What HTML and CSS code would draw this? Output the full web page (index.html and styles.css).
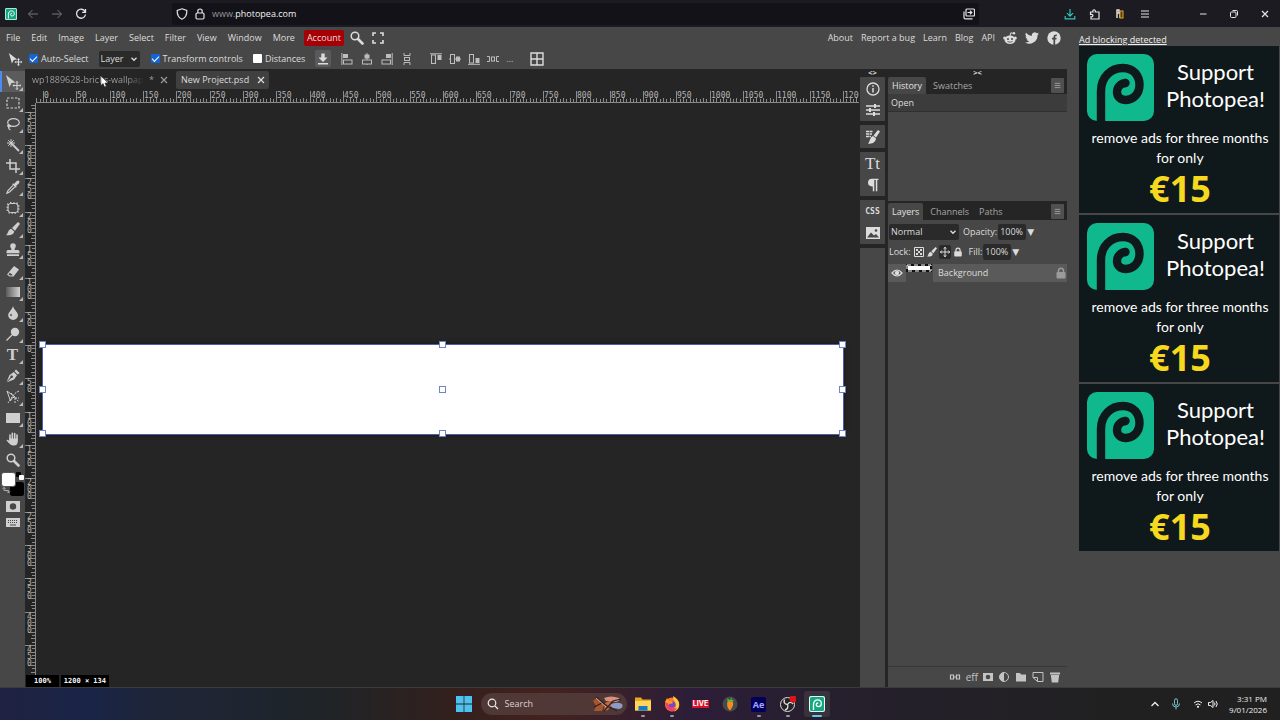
FILE: index.html
```html
<!DOCTYPE html>
<html lang="en">
<head>
<meta charset="utf-8">
<title>Photopea</title>
<link rel="stylesheet" href="styles.css">
</head>
<body>
<svg class="sprite" aria-hidden="true">
  <symbol id="pea" viewBox="0 0 67 67"><rect width="67" height="67" rx="10" fill="#10b88d"/><path d="M14 67V37C14 23 24 14 36 14C47 14 52.500 22 52.500 31C52.500 40 46 46 39 46C33 46 30 42 30 38C30 33 34 29 39 29" fill="none" stroke="#0f181a" stroke-width="8.400"/><circle cx="38.500" cy="29" r="4.200" fill="#0f181a"/></symbol>
  <symbol id="pea-app" viewBox="0 0 16 16"><rect width="16" height="16" rx="2" fill="#e8f7f2"/><rect x="1" y="1" width="14" height="14" rx="1.500" fill="#12a982"/><path d="M4.500 14V8.500C4.500 5.500 6.500 3.800 8.600 3.800C11 3.800 12.300 5.500 12.300 7.400C12.300 9.400 11 10.600 9.300 10.600C8 10.600 7.300 9.700 7.300 8.800C7.300 7.700 8 7 9.200 7" fill="none" stroke="#fff" stroke-width="1.300"/></symbol>
  <symbol id="move" viewBox="0 0 16 16"><path d="M1 1L10.500 8.500L6.500 9L4.500 13Z" fill="currentColor"/><path d="M12 7.500V15.500M8 11.500H16" stroke="currentColor" stroke-width="1.200"/><path d="M10.700 9L12 7.200L13.300 9M10.700 14L12 15.800L13.300 14M9.500 10.200L7.700 11.500L9.500 12.800M14.500 10.200L16.200 11.500L14.500 12.800" fill="none" stroke="currentColor" stroke-width=".7"/></symbol>
  <symbol id="close" viewBox="0 0 10 10"><path d="M2 2L8 8M8 2L2 8" stroke="currentColor" stroke-width="1.200"/></symbol>
  <symbol id="menu" viewBox="0 0 10 10"><path d="M1 2H9M1 5H9M1 8H9" stroke="currentColor" stroke-width="1.200"/></symbol>
  <symbol id="chevron" viewBox="0 0 8 8"><path d="M1.500 2.800L4 5.300L6.500 2.800" fill="none" stroke="currentColor" stroke-width="1.300"/></symbol>
  <symbol id="lock" viewBox="0 0 12 12"><rect x="1.500" y="5" width="9" height="6.500" rx="1" fill="currentColor"/><path d="M3.500 5.500V4A2.500 2.800 0 0 1 8.500 4V5.500" fill="none" stroke="currentColor" stroke-width="1.500"/></symbol>
  <symbol id="magnifier" viewBox="0 0 14 14"><circle cx="5" cy="5" r="3.800" fill="none" stroke="currentColor" stroke-width="1.500"/><path d="M8 8L12.500 12.500" stroke="currentColor" stroke-width="2.600" stroke-linecap="round"/></symbol>
  <symbol id="brush" viewBox="0 0 14 14"><path d="M12 0L14 1.800L9 8.800L6 6Z" fill="currentColor"/><path d="M5.200 6.800L8.200 9.600C7.800 12.800 4.500 13.800 0 13.200C2.300 12 1.800 7.600 5.200 6.800Z" fill="currentColor"/></symbol>
  <symbol id="mask" viewBox="0 0 14 11"><path fill-rule="evenodd" d="M0 0H14V11H0ZM7 2.300A3.200 3.200 0 1 0 7 8.700A3.200 3.200 0 1 0 7 2.300Z" fill="currentColor"/></symbol>
</svg>

<header class="browser">
  <nav class="browser-nav" aria-label="Browser">
    <svg class="i12"><use href="#pea-app"/></svg>
    <button class="ghost dim" aria-label="Back"><svg class="i12" viewBox="0 0 12 12"><path d="M11 6H1.500M5.500 2L1.500 6L5.500 10" fill="none" stroke="currentColor"/></svg></button>
    <button class="ghost dim" aria-label="Forward"><svg class="i12" viewBox="0 0 12 12"><path d="M1 6H10.500M6.500 2L10.500 6L6.500 10" fill="none" stroke="currentColor"/></svg></button>
    <button class="ghost" aria-label="Reload"><svg class="i12" viewBox="0 0 12 12"><path d="M10 3.500A4.500 4.500 0 1 0 10.500 6.500M10.500 1V4.300H7.200" fill="none" stroke="currentColor" stroke-width="1.300"/></svg></button>
  </nav>
  <div class="address">
    <svg class="i12" viewBox="0 0 12 12"><path d="M6 .8L10.800 2.500C11 7 9 10 6 11.300C3 10 1 7 1.200 2.500Z" fill="none" stroke="currentColor" stroke-width="1.200"/></svg>
    <svg class="i12" viewBox="0 0 12 12"><rect x="2" y="5" width="8" height="6" rx="1.200" fill="none" stroke="currentColor" stroke-width="1.200"/><path d="M3.800 5V3.200A2.200 2.200 0 0 1 8.200 3.200V5" fill="none" stroke="currentColor" stroke-width="1.200"/></svg>
    <p class="url"><span>www.</span>photopea.com</p>
    <button class="ghost" aria-label="Switch to tab"><svg class="i12" viewBox="0 0 12 12"><rect x="3" y="1" width="8.500" height="7" rx="1" fill="none" stroke="currentColor" stroke-width="1.200"/><path d="M1 3.500V9.500Q1 10.800 2.300 10.800H9.500M4.500 4.500H8.500M7 2.800L8.800 4.500L7 6.200" fill="none" stroke="currentColor" stroke-width="1.200"/></svg></button>
  </div>
  <div class="browser-tools">
    <button class="ghost teal" aria-label="Downloads"><svg class="i12" viewBox="0 0 12 12"><path d="M6 1V8M3 5.200L6 8.200L9 5.200M1.200 8V10.800H10.800V8" fill="none" stroke="currentColor" stroke-width="1.200"/></svg></button>
    <button class="ghost" aria-label="Extensions"><svg class="i12" viewBox="0 0 12 12"><path d="M1.500 4H4C3 1 7 1 6.300 4H10V11H2V8.800C4.700 9.300 4.700 5.800 1.500 6.500Z" fill="none" stroke="currentColor" stroke-width="1.200"/></svg></button>
    <button class="ghost" aria-label="Extension"><svg class="i12" viewBox="0 0 12 12"><path d="M3 10V2H5V5H3M6 4V10" fill="none" stroke="#ddd" stroke-width="1.500"/><rect x="6" y="3" width="3" height="7" fill="#5a3a10" stroke="#e6a82a"/></svg></button>
    <button class="ghost" aria-label="Application menu"><svg class="i10"><use href="#menu"/></svg></button>
  </div>
  <div class="window-controls">
    <button class="ghost" aria-label="Minimise"><svg class="i10" viewBox="0 0 10 10"><path d="M2 5H8.500" stroke="currentColor"/></svg></button>
    <button class="ghost" aria-label="Restore"><svg class="i10" viewBox="0 0 10 10"><rect x="1.500" y="3" width="5.500" height="5.500" rx="1" fill="none" stroke="currentColor"/><path d="M3.500 1.500H7.500Q8.500 1.500 8.500 2.500V6.500" fill="none" stroke="currentColor"/></svg></button>
    <button class="ghost" aria-label="Close"><svg class="i10"><use href="#close"/></svg></button>
  </div>
</header>

<div class="app">
  <main class="editor">
    <div class="menubar">
      <nav class="menus" aria-label="Menu">
        <button>File</button><button>Edit</button><button>Image</button><button>Layer</button><button>Select</button><button>Filter</button><button>View</button><button>Window</button><button>More</button>
      </nav>
      <button class="account">Account</button>
      <button class="search-tool" aria-label="Search"><svg class="i14"><use href="#magnifier"/></svg></button>
      <button aria-label="Full screen"><svg class="i12" viewBox="0 0 12 12"><path d="M1 4V1H4M8 1H11V4M11 8V11H8M4 11H1V8" fill="none" stroke="currentColor" stroke-width="1.600"/></svg></button>
      <nav class="links" aria-label="Site">
        <a href="#">About</a><a href="#">Report a bug</a><a href="#">Learn</a><a href="#">Blog</a><a href="#">API</a>
        <a href="#" aria-label="Reddit"><svg class="i14" viewBox="0 0 14 14"><ellipse cx="7" cy="8.700" rx="5.500" ry="4.300" fill="currentColor"/><circle cx="1.700" cy="7" r="1.500" fill="currentColor"/><circle cx="12.300" cy="7" r="1.500" fill="currentColor"/><path d="M7 5L7.800 1.800L11 2.500" fill="none" stroke="currentColor"/><circle cx="11" cy="2.300" r="1.200" fill="currentColor"/><circle cx="5" cy="8" r="1" fill="#474747"/><circle cx="9" cy="8" r="1" fill="#474747"/><path d="M4.500 10.500Q7 12 9.500 10.500" fill="none" stroke="#474747" stroke-width=".8"/></svg></a>
        <a href="#" aria-label="Twitter"><svg class="i14" viewBox="0 0 24 24"><path fill="currentColor" d="M24 4.600a10 10 0 0 1-2.800.8 5 5 0 0 0 2.100-2.700 10 10 0 0 1-3.100 1.200 4.900 4.900 0 0 0-8.400 4.500A14 14 0 0 1 1.700 3.100a4.900 4.900 0 0 0 1.500 6.600 5 5 0 0 1-2.200-.6 4.900 4.900 0 0 0 3.900 4.900 5 5 0 0 1-2.200.1 4.900 4.900 0 0 0 4.600 3.400A10 10 0 0 1 0 19.500 14 14 0 0 0 21.500 7.100 10 10 0 0 0 24 4.600Z"/></svg></a>
        <a href="#" aria-label="Facebook"><svg class="i14" viewBox="0 0 14 14"><circle cx="7" cy="7" r="6.700" fill="currentColor"/><path d="M7.300 14V6.500Q7.300 4 9.800 4.300M5 7.700H9.500" fill="none" stroke="#474747" stroke-width="1.700"/></svg></a>
      </nav>
    </div>

    <div class="options">
      <svg class="i14 option-move"><use href="#move"/></svg>
      <label><input type="checkbox" checked>Auto-Select</label>
      <span class="select target"><select aria-label="Select target"><option>Layer</option><option>Group</option></select><svg class="i8"><use href="#chevron"/></svg></span>
      <label><input type="checkbox" checked>Transform controls</label>
      <label><input type="checkbox">Distances</label>
      <button class="export" aria-label="Export"><svg class="i12" viewBox="0 0 12 12"><path d="M4.300 0.500H7.700V4.500H10.500L6 9L1.500 4.500H4.300ZM1 10H11V11.500H1Z" fill="currentColor"/></svg></button>
      <div class="align">
        <button aria-label="Align left"><svg class="i12" viewBox="0 0 12 12"><path d="M.9 0V12" stroke="currentColor"/><rect x="2" y="1" width="5" height="4" fill="currentColor"/><rect x="2.500" y="7" width="8.500" height="4" fill="none" stroke="currentColor"/></svg></button>
        <button aria-label="Align centre"><svg class="i12" viewBox="0 0 12 12"><path d="M6 0V12" stroke="currentColor"/><rect x="3.500" y="1.500" width="5" height="4" fill="currentColor"/><rect x="1.500" y="7" width="9" height="4" fill="#474747" stroke="currentColor"/></svg></button>
        <button aria-label="Align right"><svg class="i12" viewBox="0 0 12 12"><path d="M11.200 0V12" stroke="currentColor"/><rect x="5" y="1" width="5" height="4" fill="currentColor"/><rect x="1" y="7" width="8.500" height="4" fill="none" stroke="currentColor"/></svg></button>
        <button aria-label="Distribute vertically"><svg class="i12" viewBox="0 0 12 12"><path d="M3 0V2.500H9V0M3 12V9.500H9V12" fill="none" stroke="currentColor"/><rect x="3.500" y="4.500" width="5" height="3" fill="none" stroke="currentColor"/></svg></button>
      </div>
      <div class="align second">
        <button aria-label="Align top"><svg class="i12" viewBox="0 0 12 12"><path d="M0 .8H12" stroke="currentColor"/><rect x="1.500" y="2" width="4" height="8.500" fill="none" stroke="currentColor"/><rect x="7.500" y="2" width="4" height="5" fill="currentColor"/></svg></button>
        <button aria-label="Align middle"><svg class="i12" viewBox="0 0 12 12"><path d="M0 6H12" stroke="currentColor"/><rect x="1.500" y="1.500" width="4" height="9" fill="#474747" stroke="currentColor"/><rect x="7" y="3.500" width="4" height="5" fill="currentColor"/></svg></button>
        <button aria-label="Align bottom"><svg class="i12" viewBox="0 0 12 12"><path d="M0 11.300H12" stroke="currentColor"/><rect x="1.500" y="1.500" width="4" height="8.500" fill="none" stroke="currentColor"/><rect x="7.500" y="5" width="4" height="5" fill="currentColor"/></svg></button>
        <button aria-label="Distribute horizontally"><svg class="i12" viewBox="0 0 12 12"><path d="M0 3.500H2.500V8.500H0M12 3.500H9.500V8.500H12" fill="none" stroke="currentColor"/><rect x="4.500" y="4" width="3" height="4" fill="none" stroke="currentColor"/></svg></button>
        <button aria-label="More options">...</button>
      </div>
      <button aria-label="Grid"><svg class="i14" viewBox="0 0 14 14"><path d="M1 1H13V13H1ZM7 1V13M1 7H13" fill="none" stroke="currentColor" stroke-width="1.400"/></svg></button>
    </div>

    <div class="workspace">
      <aside class="tools" aria-label="Tools">
        <button class="tool active" aria-label="Move"><svg class="i16"><use href="#move"/></svg></button>
        <button class="tool" aria-label="Marquee"><svg class="i14" viewBox="0 0 14 14"><rect x="1" y="2" width="12" height="10" fill="none" stroke="currentColor" stroke-width="1.200" stroke-dasharray="2.500 1.500"/></svg></button>
        <button class="tool" aria-label="Lasso"><svg class="i14" viewBox="0 0 14 14"><ellipse cx="7.500" cy="5.500" rx="5.800" ry="3.900" fill="none" stroke="currentColor" stroke-width="1.200"/><path d="M4 8.500C1 7 1 10 3.500 10C6 9 3 7 2.500 10C2.300 12 3.300 12.500 4.500 13" fill="none" stroke="currentColor" stroke-width="1.200"/></svg></button>
        <button class="tool" aria-label="Magic wand"><svg class="i14" viewBox="0 0 14 14"><path d="M5 5L13 13" stroke="currentColor" stroke-width="1.800"/><path d="M5 1V9M1 5H9M2.200 2.200L7.800 7.800M7.800 2.200L2.200 7.800" stroke="currentColor"/></svg></button>
        <button class="tool" aria-label="Crop"><svg class="i14" viewBox="0 0 14 14"><path d="M4 0V10H14M0 4H10V14" fill="none" stroke="currentColor" stroke-width="1.500"/></svg></button>
        <button class="tool" aria-label="Eyedropper"><svg class="i14" viewBox="0 0 14 14"><path d="M8 4L10.500 1.200Q12 0 13.200 1Q14 2.200 12.800 3.500L10 6L10.800 6.800L9.800 7.800L6.200 4.200L7.200 3.200Z" fill="currentColor"/><path d="M7 5.300L2 10.500L.8 13.300L3.500 12L8.800 7" fill="none" stroke="currentColor" stroke-width="1.200"/></svg></button>
        <button class="tool" aria-label="Healing"><svg class="i14" viewBox="0 0 14 14"><rect x="2" y="2.500" width="10" height="9" rx="2.500" fill="none" stroke="currentColor"/><rect x="1.500" y="2" width="11" height="10" rx="3" fill="none" stroke="currentColor" stroke-width="2" stroke-dasharray="1 2"/></svg></button>
        <button class="tool" aria-label="Brush"><svg class="i14"><use href="#brush"/></svg></button>
        <button class="tool" aria-label="Clone stamp"><svg class="i14" viewBox="0 0 14 14"><path d="M5.500 7C5.500 5 4.200 4.800 4.200 3A2.800 2.800 0 0 1 9.800 3C9.800 4.800 8.500 5 8.500 7H12Q13.500 7 13.500 8.500V10.200H.5V8.500Q.5 7 2 7ZM1 11.200H13V13H1Z" fill="currentColor"/></svg></button>
        <button class="tool" aria-label="Eraser"><svg class="i14" viewBox="0 0 14 14"><path d="M8 2L13 5.500L7.500 12.500H3.500L1 10.500Z" fill="currentColor"/><path d="M3.800 8.800L6.800 11L5.900 11.600H4L2.500 10.400Z" fill="#474747"/></svg></button>
        <button class="tool" aria-label="Gradient"><span class="gradient-icon"></span></button>
        <button class="tool" aria-label="Blur"><svg class="i14" viewBox="0 0 14 14"><path d="M7 0C8 4 12 6 12 9.200A4.700 4.500 0 0 1 2.200 9.200C2.200 6 6 4 7 0Z" fill="currentColor"/><circle cx="5" cy="9" r="1.200" fill="#777"/></svg></button>
        <button class="tool" aria-label="Dodge"><svg class="i14" viewBox="0 0 14 14"><circle cx="9" cy="5" r="4.200" fill="currentColor"/><path d="M6 8L.5 13.500" stroke="currentColor" stroke-width="1.300"/></svg></button>
        <button class="tool glyph" aria-label="Type">T</button>
        <button class="tool" aria-label="Pen"><svg class="i14" viewBox="0 0 14 14"><path d="M10 .5L13.500 4L11.800 5.500L8.500 2.200ZM7.800 3L11 6.200L8 10.500L1 13.300L5.300 9A1.300 1.300 0 1 0 4.500 8.300L.7 12.800L3.500 6Z" fill="currentColor"/></svg></button>
        <button class="tool" aria-label="Path select"><svg class="i14" viewBox="0 0 14 14"><path d="M1 1L9 7L6 8L4.500 11Z" fill="none" stroke="currentColor"/><path d="M13 1C8 3 6 7 2 13M5 3L13 12M9 8H13M9 8V13" fill="none" stroke="currentColor" stroke-dasharray="2 1"/></svg></button>
        <button class="tool" aria-label="Rectangle"><svg class="i14" viewBox="0 0 14 14"><path d="M0 2H14V12H0Z" fill="currentColor"/></svg></button>
        <button class="tool" aria-label="Hand"><svg class="i14" viewBox="0 0 14 14"><path d="M4 8V3M6.300 7V1.300M8.700 7V1.500M11 8V3" stroke="currentColor" stroke-width="1.600" stroke-linecap="round"/><path d="M3.200 6.500H11.800V9C11.800 12 10.500 13.500 8 13.500C5 13.500 4 12.500 .5 8.500C1 7.500 2 7.500 3.200 9Z" fill="currentColor"/></svg></button>
        <button class="tool last" aria-label="Zoom"><svg class="i14"><use href="#magnifier"/></svg></button>
        <div class="colours">
          <svg viewBox="0 0 25 26"><rect x="10" y="11" width="14" height="14" rx="2.500" fill="#000"/><rect x="1.500" y="1.500" width="14" height="14" rx="2.500" fill="#fff" stroke="#555"/><rect x="16" y="1" width="5" height="5" rx="1" fill="#000"/><rect x="19" y="4" width="5" height="5" rx="1" fill="#fff"/><path d="M4 16.500V19.500H8.500V21.500M2.500 18L4 16.300L5.500 18M7 20.500L8.500 22L10 20.500" fill="none" stroke="#aaa"/></svg>
        </div>
        <button class="mode" aria-label="Quick mask"><svg viewBox="0 0 14 11"><use href="#mask"/></svg></button>
        <button class="mode" aria-label="Keyboard"><svg viewBox="0 0 14 11"><path d="M0 1H14V10H0Z" fill="currentColor"/><path d="M2 3.500H12M2 5.500H12" stroke="#474747" stroke-dasharray="1 1"/><path d="M4 8H10" stroke="#474747"/></svg></button>
      </aside>

      <section class="document">
        <div class="tabs">
          <div class="tab muted"><span class="name">wp1889628-bricks-wallpap</span><span>*</span><button aria-label="Close tab"><svg class="i10"><use href="#close"/></svg></button></div>
          <div class="tab current"><span>New Project.psd</span><button aria-label="Close tab"><svg class="i10"><use href="#close"/></svg></button></div>
        </div>
        <div class="ruler-x" id="ruler-x"></div>
        <div class="ruler-y" id="ruler-y"></div>
        <div class="canvas">
          <div class="artboard">
            <i class="handle n w"></i><i class="handle n c"></i><i class="handle n e"></i>
            <i class="handle m w"></i><i class="handle m c"></i><i class="handle m e"></i>
            <i class="handle s w"></i><i class="handle s c"></i><i class="handle s e"></i>
          </div>
        </div>
        <div class="status"><span>100%</span><span>1200 × 134</span></div>
        <svg class="cursor" viewBox="0 0 10 14"><path d="M1 1V11.500L3.500 9.300L5 13L7 12.200L5.500 8.700H9Z" fill="#fff" stroke="#222" stroke-width=".6"/></svg>
      </section>

      <aside class="dock" aria-label="Collapsed panels">
        <button class="collapse" aria-label="Expand">&lt;&gt;</button>
        <div class="dock-group">
          <button aria-label="Info"><svg class="i14" viewBox="0 0 14 14"><circle cx="7" cy="7" r="6" fill="none" stroke="currentColor" stroke-width="1.300"/><path d="M7 6V10.500M7 3.300V4.800" stroke="currentColor" stroke-width="1.500"/></svg></button>
          <button aria-label="Properties"><svg class="i14" viewBox="0 0 14 14"><path d="M0 3H14M0 7H14M0 11H14" stroke="currentColor" stroke-width="1.300"/><path d="M9 1V5M4 5V9M8 9V13" stroke="currentColor" stroke-width="2"/></svg></button>
        </div>
        <div class="dock-group">
          <button aria-label="Brushes"><svg class="i14" viewBox="0 0 14 14"><path d="M0 1.500H7M0 4H6M0 6.500H5" stroke="currentColor" stroke-width="1.300" stroke-dasharray="3 .5"/><path d="M12 0L14 1.500L10 7.500L7.500 5.500ZM7 6L10 8.500C9.500 12.500 6 14.300 2 13.500C4 12 3.500 7.500 7 6Z" fill="currentColor"/></svg></button>
        </div>
        <div class="dock-group">
          <button class="glyph" aria-label="Character">Tt</button>
          <button class="glyph" aria-label="Paragraph"><svg class="i14" viewBox="0 0 14 14"><path d="M12.500 .8H6A4 3.800 0 0 0 6 8.400H6.800V13.300H8.300V2H9.800V13.300H11.300V2H12.500Z" fill="currentColor"/></svg></button>
        </div>
        <div class="dock-group">
          <button class="css" aria-label="CSS">CSS</button>
          <button aria-label="Image"><svg class="i14" viewBox="0 0 14 14"><path d="M0 1H14V13H0Z" fill="currentColor"/><path d="M1 11.500L5 6.500L8 9.500L10 8L13 11.500Z" fill="#474747"/><circle cx="10" cy="4.500" r="1.300" fill="#474747"/></svg></button>
        </div>
        <div class="dock-rest"></div>
      </aside>

      <aside class="panels">
        <button class="collapse" aria-label="Collapse">&gt;&lt;</button>
        <section class="history">
          <div class="panel-tabs"><button class="on">History</button><button>Swatches</button><button class="panel-menu" aria-label="Panel menu"><svg viewBox="0 0 10 10"><use href="#menu"/></svg></button></div>
          <p class="history-item">Open</p>
        </section>
        <section class="layers">
          <div class="panel-tabs"><button class="on">Layers</button><button>Channels</button><button>Paths</button><button class="panel-menu" aria-label="Panel menu"><svg viewBox="0 0 10 10"><use href="#menu"/></svg></button></div>
          <div class="layer-row">
            <span class="select blend"><select aria-label="Blend mode"><option>Normal</option><option>Multiply</option></select><svg class="i8"><use href="#chevron"/></svg></span>
            <label>Opacity: <input type="text" value="100%"></label><button class="drop" aria-label="Opacity slider">▼</button>
          </div>
          <div class="layer-row locks">
            <span>Lock:</span>
            <button aria-label="Lock transparency"><svg class="i10" viewBox="0 0 10 10"><path d="M.5.5H9.500V9.500H.5Z" fill="none" stroke="currentColor"/><path d="M2 2H4V4H2ZM6 2H8V4H6ZM4 4H6V6H4ZM2 6H4V8H2ZM6 6H8V8H6Z" fill="currentColor"/></svg></button>
            <button aria-label="Lock pixels"><svg class="i10"><use href="#brush"/></svg></button>
            <button class="pressed" aria-label="Lock position"><svg class="i10" viewBox="0 0 10 10"><path d="M5 0V10M0 5H10M3.500 1.800L5 .4L6.500 1.800M3.500 8.200L5 9.600L6.500 8.200M1.800 3.500L.4 5L1.800 6.500M8.200 3.500L9.600 5L8.200 6.500" fill="none" stroke="currentColor"/></svg></button>
            <button aria-label="Lock all"><svg class="i10"><use href="#lock"/></svg></button>
            <label>Fill: <input type="text" value="100%"></label><button class="drop" aria-label="Fill slider">▼</button>
          </div>
          <div class="layer">
            <button class="eye" aria-label="Visibility"><svg class="i12" viewBox="0 0 12 12"><path d="M1 6Q6 0 11 6Q6 12 1 6Z" fill="none" stroke="currentColor" stroke-width="1.200"/><circle cx="6" cy="6" r="2.200" fill="currentColor"/></svg></button>
            <span class="thumb"><svg viewBox="0 0 26 8"><path d="M1 1H25V7H1Z" fill="#fff" stroke="#111" stroke-width="2"/><path d="M1 1H25V7H1Z" fill="none" stroke="#fff" stroke-dasharray="4 3"/></svg></span>
            <span class="layer-name">Background</span>
            <svg class="i12 layer-lock"><use href="#lock"/></svg>
          </div>
          <div class="layer-actions">
            <button aria-label="Link"><svg class="i12" viewBox="0 0 12 12"><path d="M1.500 4H4.500V8H1.500ZM7.500 4H10.500V8H7.500ZM4 6H8" fill="none" stroke="currentColor" stroke-width="1.200"/></svg></button>
            <button class="eff" aria-label="Effects">eff</button>
            <button aria-label="Mask"><svg class="i10" viewBox="0 0 14 11"><use href="#mask"/></svg></button>
            <button aria-label="Adjustment"><svg class="i12" viewBox="0 0 12 12"><circle cx="6" cy="6" r="4.500" fill="none" stroke="currentColor"/><path d="M6 1.500A4.500 4.500 0 0 0 6 10.500Z" fill="currentColor"/></svg></button>
            <button aria-label="Folder"><svg class="i12" viewBox="0 0 12 12"><path d="M1 2H5L6 3.500H11V10.500H1Z" fill="currentColor"/></svg></button>
            <button aria-label="New layer"><svg class="i12" viewBox="0 0 12 12"><path d="M1 1.500H11V10.500H5.500L1 6.500V1.500M5.500 10.500V6.500H1" fill="none" stroke="currentColor"/></svg></button>
            <button aria-label="Delete"><svg class="i12" viewBox="0 0 12 12"><path d="M1 1.500H11V3.500H1ZM1.800 4H10.200L9.200 11.500H2.800Z" fill="currentColor"/></svg></button>
          </div>
        </section>
      </aside>
    </div>
  </main>

  <aside class="ads">
    <a class="notice" href="#">Ad blocking detected</a>
    <a class="ad" href="#"><svg class="ad-logo"><use href="#pea"/></svg><span class="ad-title">Support Photopea!</span><span class="ad-text">remove ads for three months for only</span><strong>€15</strong></a>
    <a class="ad" href="#"><svg class="ad-logo"><use href="#pea"/></svg><span class="ad-title">Support Photopea!</span><span class="ad-text">remove ads for three months for only</span><strong>€15</strong></a>
    <a class="ad" href="#"><svg class="ad-logo"><use href="#pea"/></svg><span class="ad-title">Support Photopea!</span><span class="ad-text">remove ads for three months for only</span><strong>€15</strong></a>
  </aside>
</div>

<footer class="taskbar">
  <div class="task-apps">
    <button class="task" aria-label="Start"><svg class="i16" viewBox="0 0 16 16"><path d="M0 0H7.600V7.600H0ZM8.400 0H16V7.600H8.400ZM0 8.400H7.600V16H0ZM8.400 8.400H16V16H8.400Z" fill="#4cc2f1"/></svg></button>
    <label class="task-search">
      <svg class="i12" viewBox="0 0 12 12"><circle cx="5" cy="5" r="3.800" fill="none" stroke="currentColor" stroke-width="1.200"/><path d="M8 8L11 11" stroke="currentColor" stroke-width="1.200"/></svg>
      <input type="search" placeholder="Search" aria-label="Search">
      <svg class="art" viewBox="0 0 30 16"><path d="M0 5Q4 0 7 4L11 9L9 15H1L3 10Z" fill="#a9552a"/><path d="M11 2Q18-1 26 2Q28 5 22 6L13 5Z" fill="#d9907c"/><path d="M16 9Q24 5 29 8Q31 12 26 13L20 12Z" fill="#8d9bcb"/><path d="M12 7L17 5L19 8L15 14L11 15Z" fill="#c96c38"/><path d="M3 1L14 10L24 15M11 15L20 5L28 3M1 11L9 7" fill="none" stroke="#2c2026" stroke-width="1.200"/><path d="M3 2L13 11" stroke="#ddd" stroke-width=".7"/></svg>
    </label>
    <button class="task run" aria-label="Files"><svg class="i16" viewBox="0 0 16 16"><path d="M0 1.500H6L7.500 3.500H16V14.500H0Z" fill="#e8a91f"/><path d="M0 5H16V14.500H0Z" fill="#ffd65a"/><path d="M3.500 10H12.500V14.500H3.500Z" fill="#1978c8"/></svg></button>
    <button class="task run" aria-label="Firefox"><svg class="i16" viewBox="0 0 16 16"><circle cx="8" cy="8.500" r="7" fill="#ff7a26"/><path d="M9 0Q15 3 15.300 8.500Q15 14 10 15.500Q13 11 11 7Q9 3 9 0Z" fill="#ffc83a"/><path d="M1.500 5Q1 12 6 15Q11 16 13 12Q8 14 4 8Z" fill="#ef3f67"/><circle cx="8.300" cy="8.500" r="3.300" fill="#7a46c9"/><path d="M1 6L3 2L5 5Q8 4 9 7L6 8Z" fill="#ff9a28"/></svg></button>
    <button class="task" aria-label="Live"><span class="live">LIVE</span></button>
    <button class="task" aria-label="FL Studio"><svg class="i16" viewBox="0 0 16 16"><circle cx="8" cy="8" r="7.500" fill="#454b4c"/><path d="M5.500 5.500Q9 3 11 6Q12 10 8 14.500Q4 11 5.500 5.500Z" fill="#f78b1f"/><path d="M7 6Q5 5 5 2.500L8 4L10 1L9.500 4L12 4Q10 7 7 6Z" fill="#63b53c"/></svg></button>
    <button class="task run" aria-label="After Effects"><span class="ae">Ae</span></button>
    <button class="task run" aria-label="OBS"><svg class="i16" viewBox="0 0 16 16"><circle cx="7.500" cy="8.500" r="7" fill="#242226" stroke="#ddd"/><path d="M7.500 8.500Q3 8 4.500 3.500M7.500 8.500Q10 4.500 13 8M7.500 8.500Q9 12.500 5 14" fill="none" stroke="#ddd" stroke-width="1.400"/><circle cx="13" cy="3" r="3.500" fill="#e01414"/></svg></button>
    <button class="task run focus" aria-label="Photopea"><svg class="i16"><use href="#pea-app"/></svg></button>
  </div>
  <div class="tray">
    <svg class="i10" viewBox="0 0 10 10"><path d="M1.500 7L5 3.500L8.500 7" fill="none" stroke="currentColor" stroke-width="1.300"/></svg>
    <svg class="i12 mic" viewBox="0 0 12 12"><rect x="4.500" y=".8" width="3" height="6.500" rx="1.500" fill="none" stroke="currentColor"/><path d="M2.500 5.500Q2.500 9 6 9Q9.500 9 9.500 5.500M6 9V11.500" fill="none" stroke="currentColor"/></svg>
    <span class="net">
      <svg class="i10" viewBox="0 0 10 10"><path d="M1 4Q5 .5 9 4M2.500 6Q5 3.500 7.500 6" fill="none" stroke="currentColor"/><circle cx="5" cy="7.800" r="1.100" fill="currentColor"/></svg>
      <svg class="i10" viewBox="0 0 10 10"><path d="M.5 3.500H2.500L5 1.500V8.500L2.500 6.500H.5ZM6.500 3.500Q7.500 5 6.500 6.500M8 2Q10.500 5 8 8" fill="none" stroke="currentColor"/></svg>
    </span>
    <p class="clock">3:31 PM<br>9/01/2026</p>
  </div>
</footer>
<script src="rulers.js"></script>
</body>
</html>
```
FILE: styles.css
```css
* { box-sizing: border-box; }
body {
  margin: 0;
  height: 100vh;
  display: flex;
  flex-direction: column;
  overflow: hidden;
  background: #474747;
  color: #dcdcdc;
  font: 9px/16px "Open Sans", "Noto Sans", sans-serif;
}
p { margin: 0; }
svg { display: block; flex: none; }
a { color: inherit; text-decoration: none; }
button, input, select { font: inherit; color: inherit; border: 0; margin: 0; padding: 0; background: none; }
button { display: flex; align-items: center; justify-content: center; flex: none; }
.sprite { position: absolute; width: 0; height: 0; }
.i8 { width: 8px; height: 8px; }
.i10 { width: 10px; height: 10px; }
.i12 { width: 12px; height: 12px; }
.i14 { width: 14px; height: 14px; }
.i16 { width: 16px; height: 16px; }

/* Browser chrome */
.browser { flex: none; height: 27px; display: flex; align-items: center; background: #1c1b22; color: #e4e4e8; }
.browser-nav { width: 172px; display: flex; align-items: center; gap: 12px; padding-left: 5px; }
.browser-nav > svg { margin-right: -2px; }
.dim { color: #77767c; }
.address { flex: 1; display: flex; align-items: center; gap: 6px; height: 22px; padding: 0 4px; background: #131218; border-radius: 3px; }
.url { flex: 1; margin-left: 0; color: #f2f2f5; }
.url span { color: #96959c; }
.browser-tools { display: flex; margin-left: 78px; }
.browser-tools button { width: 25px; }
.teal { color: #2fc7b9; }
.window-controls { display: flex; margin-left: 30px; }
.window-controls button { width: 31px; }

/* Editor shell */
.app { flex: 1; min-height: 0; display: flex; }
.editor { flex: 1; min-width: 0; display: flex; flex-direction: column; }
.menubar { flex: none; height: 21px; display: flex; align-items: center; padding: 0 18px 0 6px; }
.menus { display: flex; gap: 11px; margin-right: 9px; }
.account { background: #a50005; color: #f0dede; border-radius: 2px; padding: 0 3px; margin-right: 6px; }
.search-tool { margin-right: 8px; }
.links { display: flex; align-items: center; gap: 8px; margin-left: auto; }
.options { flex: none; height: 21px; display: flex; align-items: center; padding-left: 8px; }
.options label { display: flex; align-items: center; gap: 3px; margin-right: 10px; white-space: nowrap; }
.option-move { margin-right: 7px; }
input[type="checkbox"] { appearance: none; width: 9px; height: 9px; background: #fff; border-radius: 1px; display: grid; place-items: center; }
input[type="checkbox"]:checked { background: #1464d2; }
input[type="checkbox"]:checked::after { content: ""; width: 6px; height: 3px; border: solid #fff; border-width: 0 0 1px 1px; transform: rotate(-45deg); margin-bottom: 2px; }
.select { position: relative; display: flex; }
.select select { appearance: none; width: 100%; height: 16px; padding-left: 2px; background: #2a2a2a; border-radius: 2px; }
.select svg { position: absolute; right: 2px; top: 4px; pointer-events: none; }
.target { width: 41px; margin-right: 11px; }
.export { width: 16px; height: 17px; background: #5a5a5a; border-radius: 2px; }
.align { display: flex; gap: 8px; margin-left: 10px; color: #bdbdbd; }
.align.second { gap: 7px; margin-left: 17px; margin-right: 17px; }

/* Workspace */
.workspace { flex: 1; min-height: 0; display: flex; }
.tools { width: 25px; flex: none; padding-top: 2px; display: flex; flex-direction: column; color: #cfcfcf; }
.tool { height: 21px; position: relative; }
.tool::after { content: ""; position: absolute; right: 2px; bottom: 1px; border: 2px solid; border-color: transparent #bbb #bbb transparent; }
.tool.last::after { display: none; }
.tool.active { background: #5b5b5b; box-shadow: inset 2px 0 #4b8bf5; }
.glyph { font: bold 17px/20px "Liberation Serif", serif; }
.gradient-icon { width: 14px; height: 10px; background: linear-gradient(90deg, #5a5a5a, #d2d2d2); }
.colours { height: 28px; padding-top: 1px; }
.colours svg { width: 25px; height: 26px; }
.mode { height: 16px; }
.mode svg { width: 14px; height: 11px; }

.document {
  position: relative;
  flex: 1;
  min-width: 0;
  display: grid;
  grid-template: 20px 14px 1fr / 11px 1fr;
  background: #252525;
  overflow: hidden;
}
.tabs { grid-column: 1 / -1; display: flex; gap: 4px; padding: 2px 0 0 2px; }
.tab { display: flex; align-items: center; gap: 5px; padding: 0 3px 0 5px; border-radius: 2px; }
.tab.muted { width: 145px; color: #9a9a9a; }
.tab .name { width: 112px; overflow: hidden; white-space: nowrap; mask-image: linear-gradient(90deg, #000 85%, transparent); }
.tab.current { background: #404040; gap: 7px; }
.ruler-x { grid-column: 1 / -1; position: relative; margin-left: 11px; border-bottom: 1px solid #8a8a8a; overflow: hidden; }
.ruler-y { position: relative; border-right: 1px solid #8a8a8a; overflow: hidden; }
.tick { position: absolute; background: #8a8a8a; }
.ruler-x .tick { bottom: 0; width: 1px; height: 3px; }
.ruler-x .tick.half { height: 4px; }
.ruler-x .tick.major { height: 11px; }
.ruler-y .tick { right: 0; height: 1px; width: 3px; }
.ruler-y .tick.half { width: 4px; }
.ruler-y .tick.major { width: 11px; }
.mark { position: absolute; color: #b4b4b4; font: 8px/8px "DejaVu Sans Mono", monospace; }
.ruler-x .mark { top: 3px; }
.ruler-y .mark { left: 2px; width: 5px; line-height: 7px; word-break: break-all; }
.canvas { position: relative; min-width: 0; }
.artboard { position: absolute; left: 7px; top: 242px; width: 800px; height: 89px; background: #fff; outline: 1px solid #4a5fae; box-shadow: 0 0 5px #111; }
.handle { position: absolute; width: 5px; height: 5px; margin: -3px; background: #fff; outline: 1px solid #7084c6; }
.handle.n { top: 0; } .handle.m { top: 50%; } .handle.s { top: 100%; }
.handle.w { left: 0; } .handle.c { left: 50%; } .handle.e { left: 100%; }
.status { position: absolute; left: 1px; bottom: 0; display: flex; gap: 2px; color: #f4f4f4; font: bold 7px/12px "DejaVu Sans Mono", monospace; }
.status span { background: #000; padding: 0 3px; }
.status span:first-child { padding: 0 8px; }
.cursor { position: absolute; left: 75px; top: 6px; width: 9px; height: 13px; }

.dock { width: 27px; flex: none; display: flex; flex-direction: column; gap: 4px; padding: 0 1px; background: #252525; }
.collapse { height: 8px; margin-bottom: -4px; font: bold 7px/8px "DejaVu Sans Mono", monospace; }
.dock-group { padding: 1px 0; background: #474747; border-radius: 1px; }
.dock-group button { width: 100%; height: 21px; }
.dock-group .glyph { font-weight: normal; }
.css { font: bold 8px/10px "DejaVu Sans Mono", monospace; }
.dock-rest { flex: 1; background: #474747; }

.panels { width: 181px; flex: none; margin-right: 12px; border-left: 2px solid #252525; display: flex; flex-direction: column; }
.panels .collapse { width: 100%; background: #252525; margin: 0; }
.history { height: 124px; }
.panel-tabs { display: flex; align-items: end; height: 17px; background: #252525; color: #a5a5a5; }
.panel-tabs button { height: 17px; padding: 0 5px; border-radius: 2px 2px 0 0; }
.panel-tabs .on { background: #474747; color: #e2e2e2; padding: 0 4px; margin-right: 2px; }
.panel-tabs .panel-menu { width: 13px; height: 15px; margin: 0 3px 1px auto; padding: 0; background: #505050; border-radius: 1px; }
.panel-menu svg { width: 7px; height: 7px; }
.history-item { height: 18px; padding-left: 3px; line-height: 18px; background: #3c3c3c; border-bottom: 1px solid #303030; }
.layers { flex: 1; display: flex; flex-direction: column; border-top: 2px solid #252525; }
.layer-row { display: flex; align-items: center; height: 20px; margin-top: 2px; padding-left: 1px; }
.layer-row label { display: flex; align-items: center; gap: 1px; }
.layer-row input { width: 28px; height: 16px; background: #2a2a2a; border-radius: 2px; padding-left: 2px; }
.blend { width: 70px; margin-right: 4px; }
.drop { font: 9px/12px "DejaVu Sans", sans-serif; margin-left: 1px; }
.locks { margin-top: 0; gap: 1px; }
.locks > span { margin-right: 1px; }
.locks button { width: 12px; height: 14px; }
.locks .drop { width: auto; margin-left: 0; }
.locks label { margin-left: 4px; }
.pressed { background: #2a2a2a; border-radius: 2px; }
.layer { display: flex; align-items: center; height: 18px; margin-top: 2px; background: #5a5a5a; }
.eye { width: 18px; height: 18px; }
.thumb { width: 27px; height: 18px; background: #474747; }
.thumb svg { width: 26px; height: 8px; }
.layer-name { flex: 1; padding-left: 5px; }
.layer-lock { color: #9b9b9b; }
.layer-actions { margin-top: auto; height: 21px; border-top: 1px solid #383838; display: flex; justify-content: end; align-items: center; gap: 5px; padding-right: 6px; color: #c4c4c4; }
.eff { font-size: 10px; }

/* Adverts */
.ads { width: 201px; flex: none; display: flex; flex-direction: column; gap: 2px; padding-top: 5px; }
.notice { line-height: 16px; margin-bottom: -4px; text-decoration: underline; color: #f0f0f0; }
.ad {
  display: grid;
  grid-template-columns: 67px 1fr;
  column-gap: 4px;
  align-content: start;
  justify-items: center;
  height: 167px;
  padding: 8px 6px 0 8px;
  margin-right: 1px;
  background: #0f181a;
  color: #fff;
  text-align: center;
  font-family: Lato, sans-serif;
}
.ad-logo { width: 67px; height: 67px; }
.ad-title { font-size: 22px; line-height: 27px; padding: 4px 8px 0; }
.ad-text { grid-column: 1 / -1; font-size: 14px; line-height: 20px; padding-top: 7px; }
.ad strong { grid-column: 1 / -1; font: bold 36px/42px "Open Sans", sans-serif; color: #f6d91f; }

/* Taskbar */
.taskbar {
  flex: none;
  height: 33px;
  display: grid;
  grid-template-columns: 1fr auto 1fr;
  align-items: center;
  border-top: 1px solid #3a3a40;
  color: #eee;
  background: linear-gradient(90deg, #1f2140, #1a2547 7%, #1e2538 12%, #1f2428 25%, #32201d 35%, #44221f 43%, #2c1d38 54%, #25202c 67%, #202020 88%);
}
.task-apps { grid-column: 2; display: flex; align-items: center; gap: 3px; }
.task { position: relative; width: 26px; height: 26px; border-radius: 3px; }
.task.run::after { content: ""; position: absolute; bottom: 0; width: 4px; height: 2px; border-radius: 1px; background: #9a9a9a; }
.task.focus { background: #37323c; }
.task.focus::after { width: 10px; background: #60c7f5; }
.task-search { display: flex; align-items: center; gap: 6px; width: 146px; height: 22px; padding: 0 4px 0 6px; margin-left: 1px; border-radius: 11px; background: #503837; }
.task-search input { flex: 1; min-width: 0; appearance: none; outline: 0; }
.task-search input::placeholder { color: #d8d0d0; }
.art { width: 30px; height: 16px; }
.live { background: #d5122c; color: #fff; font: bold 7px/8px "Inter", sans-serif; padding: 0 1px; }
.ae { width: 15px; height: 15px; border-radius: 2px; background: #00005b; color: #a6a5ff; font: bold 9px/15px "Open Sans", sans-serif; text-align: center; }
.tray { display: flex; justify-content: end; align-items: center; gap: 10px; padding-right: 13px; }
.mic { color: #79c3cc; }
.net { display: flex; gap: 5px; margin: 0 1px; }
.clock { font: 8px/11px "Open Sans", sans-serif; text-align: right; }
```
FILE: rulers.js
```js
// Ruler ticks: one document unit is two thirds of a pixel, a tick every 5 units.
function ruler(id, side, origin, from, to) {
  const box = document.getElementById(id);
  for (let value = from; value <= to; value += 5) {
    const at = Math.round(origin + value * 2 / 3) + "px";
    const tick = document.createElement("i");
    const major = value % 50 === 0;
    tick.className = "tick" + (major ? " major" : value % 10 === 0 ? " half" : "");
    tick.style[side] = at;
    box.append(tick);
    if (major) {
      const mark = document.createElement("span");
      mark.className = "mark";
      mark.textContent = Math.abs(value);
      mark.style[side] = "calc(" + at + " + 1px)";
      box.append(mark);
    }
  }
}
ruler("ruler-x", "left", 7, -10, 1225);
ruler("ruler-y", "top", 242, -360, 495);
```
